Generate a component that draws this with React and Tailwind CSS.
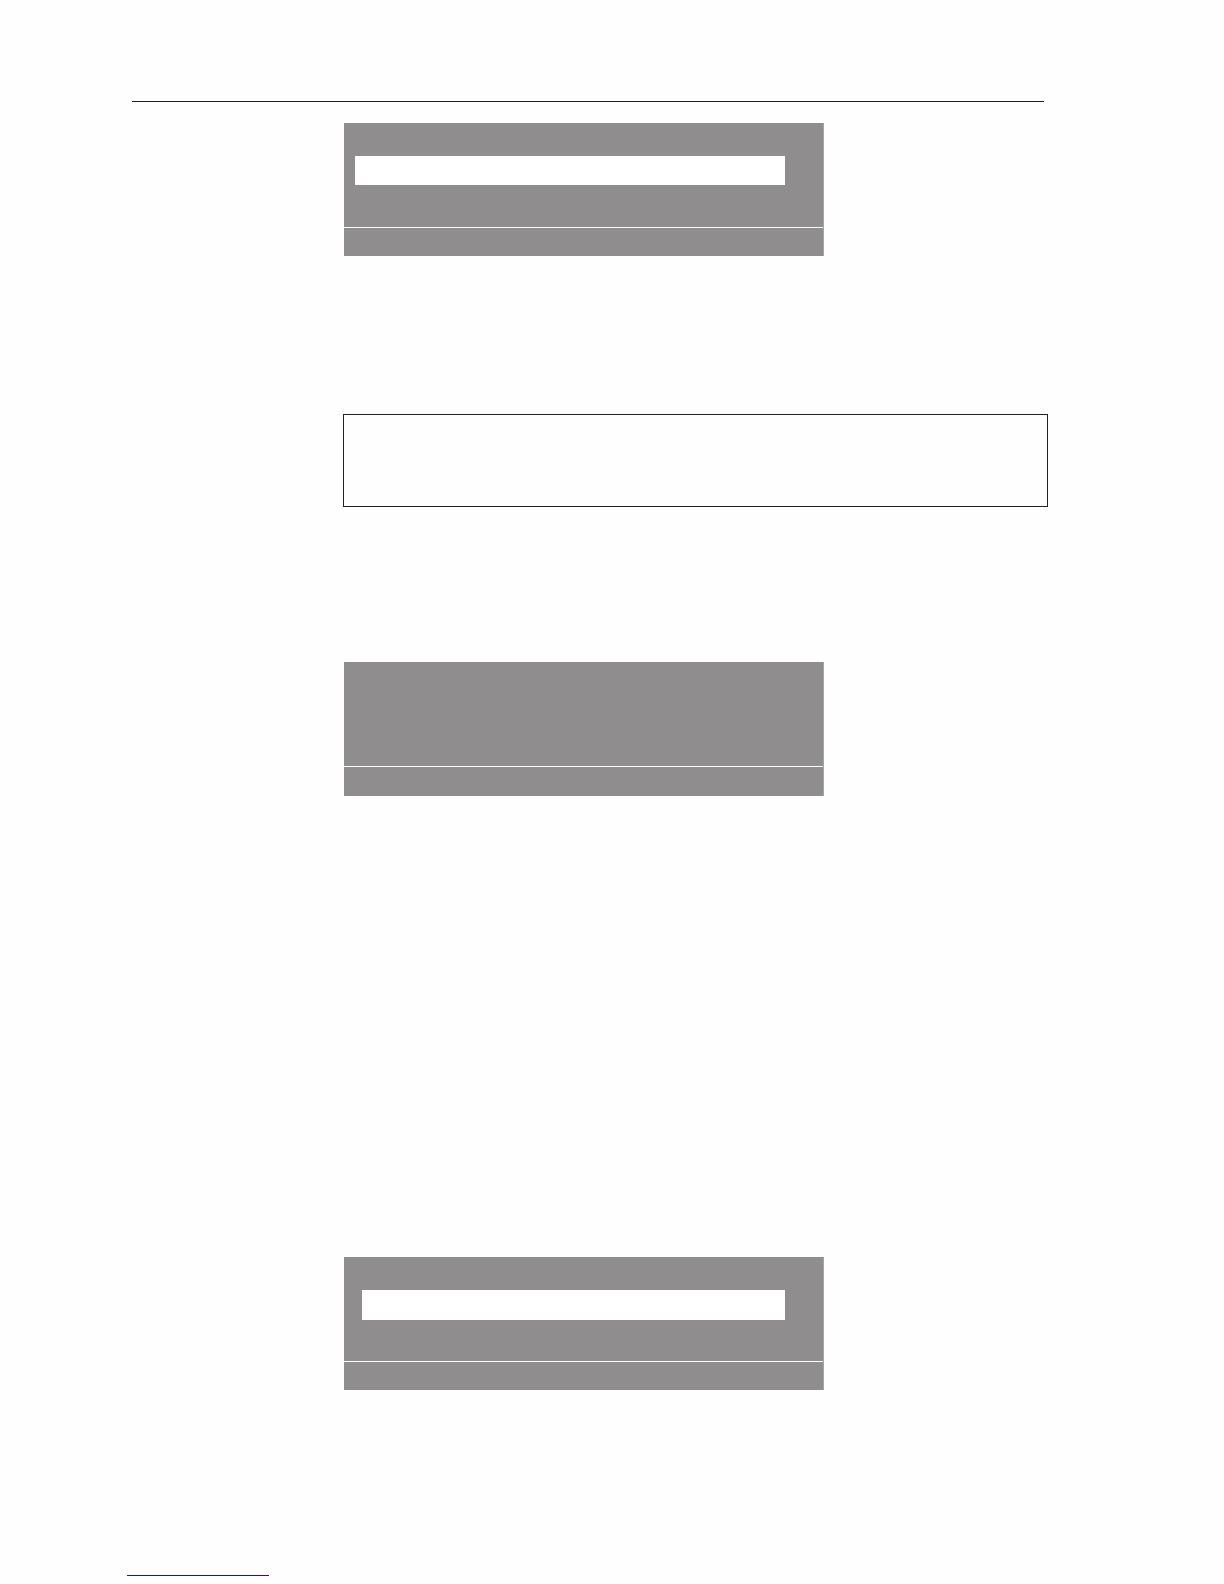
const panels = {
  first: { highlight: "mt-[33px] ml-[11px] h-[29px]", top: "h-[104px]", bottom: "h-7" },
  second: { highlight: null, top: "h-[104px]", bottom: "h-[29px]" },
  third: { highlight: "mt-[33px] ml-[18px] h-[30px]", top: "h-[104px]", bottom: "h-7" },
};

function DisplayPanel({ panel }) {
  return (
    <div className="w-full max-w-[480px] border-r border-[#a5a3a4]">
      {/* Menu area */}
      <div className={`flow-root bg-[#8f8d8e] ${panel.top}`}>
        {panel.highlight && (
          <div className={`mr-[38px] bg-white ${panel.highlight}`}></div>
        )}
      </div>

      {/* Status line */}
      <div className={`mt-px bg-[#8f8d8e] ${panel.bottom}`}></div>
    </div>
  );
}

function App() {
  return (
    <div className="min-h-screen bg-[#fefefe] flow-root">
      <hr className="mt-[101px] ml-[132px] mr-[180px] border-t border-[#231f20]" />

      <main className="mt-[21px] pl-[344px] pr-[176px]">
        <DisplayPanel panel={panels.first} />

        {/* Note box */}
        <section className="mt-[158px] -ml-px h-[93px] border border-[#231f20]"></section>

        <div className="mt-[155px]">
          <DisplayPanel panel={panels.second} />
        </div>

        <div className="mt-[461px]">
          <DisplayPanel panel={panels.third} />
        </div>
      </main>

      <footer className="mt-[170px] pl-[127px]">
        <a
          href="#"
          aria-label="Home"
          className="block h-4 w-[142px] border-b border-[#1a1a8c]"
        ></a>
      </footer>
    </div>
  );
}

export default App;
